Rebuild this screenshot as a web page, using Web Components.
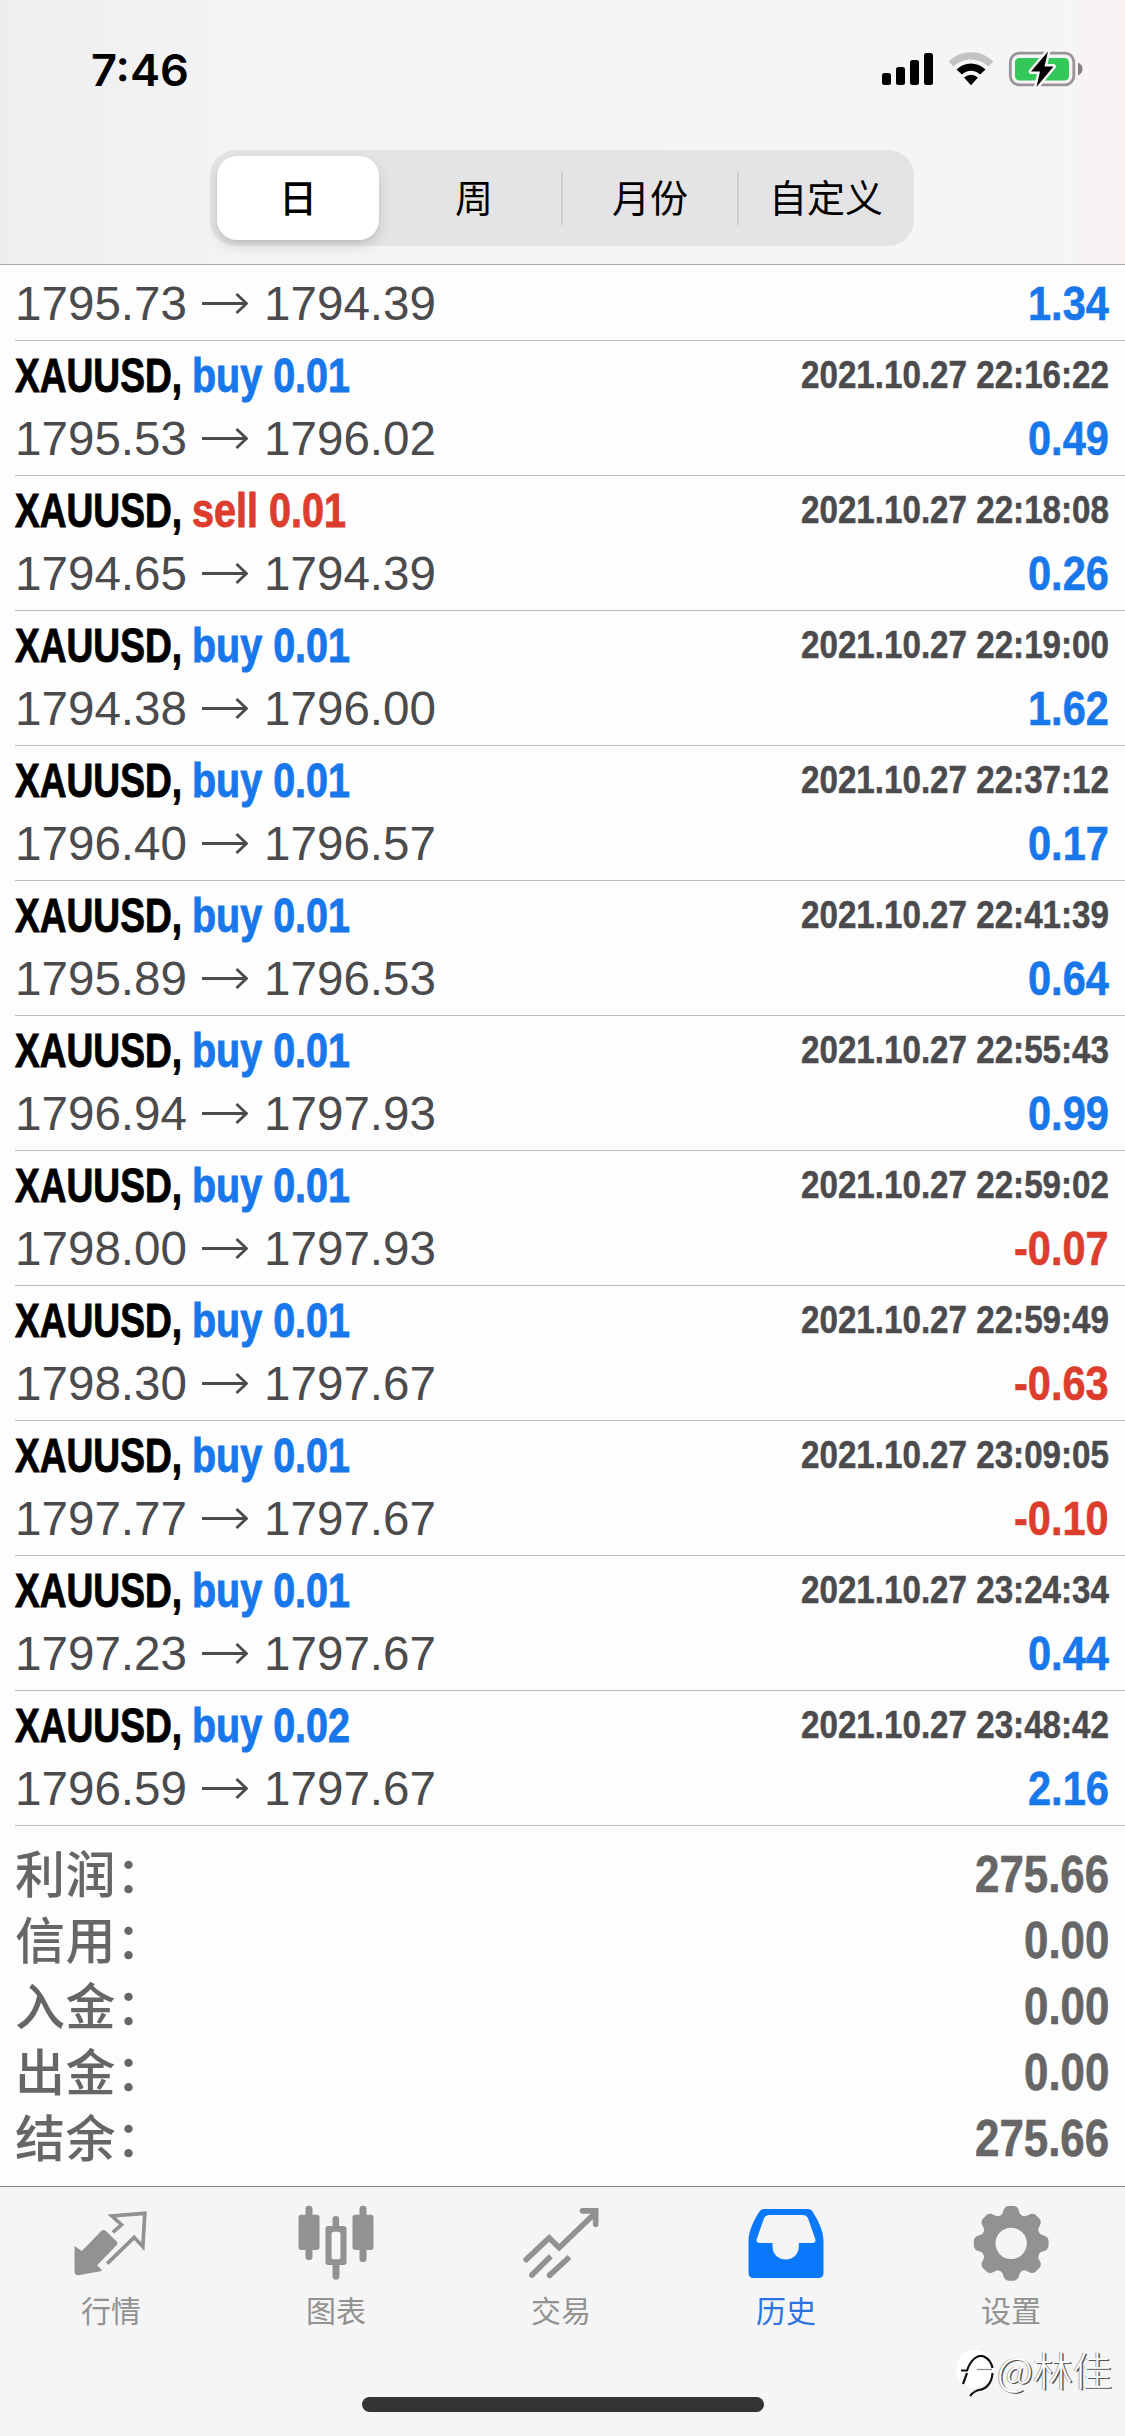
<!DOCTYPE html>
<html lang="zh-CN">
<head>
<meta charset="utf-8">
<title>历史</title>
<style>
html,body{margin:0;padding:0}
body{width:1125px;height:2436px;overflow:hidden;background:#fdfdfd;font-family:"Liberation Sans","Noto Sans CJK SC",sans-serif}
</style>
</head>
<body>
<history-screen></history-screen>
<script>
const define = (name, html, setup) => customElements.define(name, class extends HTMLElement {
  connectedCallback() {
    if (this.shadowRoot) return;
    const root = this.attachShadow({ mode: 'open' });
    const t = document.createElement('template');
    t.innerHTML = typeof html === 'function' ? html(this) : html;
    root.append(t.content.cloneNode(true));
    if (setup) setup(this, root);
  }
});

/* Condensed text: "w" is the finished width, "s" a horizontal scale. */
define('fit-text', `<style>
:host{display:block;white-space:pre;flex:none}
span{display:inline-block;transform-origin:0 0}
</style><span><slot></slot></span>`, (el, root) => {
  const span = root.querySelector('span');
  const natural = span.getBoundingClientRect().width;
  const s = el.hasAttribute('s') ? +el.getAttribute('s') : +el.getAttribute('w') / natural;
  el.style.width = natural * s + 'px';
  span.style.transform = `scaleX(${s})`;
});

define('status-bar', `<style>
:host{display:flex;justify-content:space-between;align-items:center;height:138px;box-sizing:border-box;padding:0 40px 0 91px}
.time{font:600 44px/138px Inter,"Liberation Sans",sans-serif;color:#000;padding-top:1px}
svg{display:block;width:212px;height:60px;margin-top:2px}
</style>
<fit-text class="time" w="98">7:46</fit-text>
<svg viewBox="873 40 212 60">
<g fill="#000"><rect x="882" y="73" width="9" height="12" rx="2.5"/><rect x="896" y="67" width="9" height="18" rx="2.5"/><rect x="910" y="60" width="9" height="25" rx="2.5"/><rect x="924" y="53" width="9" height="32" rx="2.5"/></g>
<path d="M948.5 61.5C961 49 981 49 993.500 61.500L988.500 66.500C978.500 57 963.500 57 953.500 66.500Z" fill="#c3c3c5"/>
<path d="M956.500 69.500C964.500 61.500 977.500 61.500 985.500 69.500L980 74.500C974.500 69.500 967.500 69.500 962 74.500Z" fill="#000"/>
<path d="M964 77.500Q971 72 978 77.500L971 85.300Z" fill="#000"/>
<rect x="1010.300" y="53.200" width="63.500" height="31.600" rx="9" fill="none" stroke="#99939a" stroke-width="2.800"/>
<rect x="1015" y="58" width="54" height="22.500" rx="4.500" fill="#34c759"/>
<path d="M1078 62.500Q1082.500 64.500 1082.500 69T1078 75.500Z" fill="#848086"/>
<path d="M1048 51.500L1031 71.500H1040L1036.500 87L1053.500 66.500H1044.500Z" fill="#000" stroke="#f8f6f7" stroke-width="5" stroke-linejoin="round" paint-order="stroke"/>
</svg>`);

define('segment-item', el => `<style>
:host{display:flex;flex:1;align-items:center;justify-content:center;position:relative}
div{display:flex;align-items:center;justify-content:center;width:162px;height:84px;border-radius:20px;font:400 38px/80px "Noto Sans CJK SC",sans-serif;color:#000;white-space:nowrap}
div slot{display:block;margin-top:-4px}
:host([selected]) div{background:#fff;font-weight:500;box-shadow:0 6px 14px rgba(0,0,0,.13),0 2px 3px rgba(0,0,0,.06)}
:host([divided])::before{content:"";position:absolute;left:-1px;top:21px;width:2px;height:54px;background:#cfcfd2}
</style><div><slot></slot></div>`);

define('period-picker', `<style>
:host{display:flex;width:704px;height:96px;margin:12px 0 0 210px;border-radius:26px;background:#e4e4e6}
</style>
<segment-item selected>日</segment-item><segment-item>周</segment-item><segment-item divided>月份</segment-item><segment-item divided>自定义</segment-item>`);

define('top-bar', `<style>
:host{display:block;height:265px;box-sizing:border-box;border-bottom:1px solid #acacae;background:linear-gradient(90deg,#eeeeef 0,#f4f4f6 22%,#f5f5f6 70%,#f6f5f5 94%,#f9f3f2 100%)}
</style><status-bar></status-bar><period-picker></period-picker>`);

define('deal-row', el => {
  const a = n => el.getAttribute(n);
  const kind = a('kind');
  const v = a('profit');
  return `<style>
:host{display:block;box-sizing:border-box;height:135px;padding:3px 16px 0 0;margin-left:15px;border-bottom:1px solid #bcbcc0}
:host([tail]){height:76px;padding-top:7px}
div{display:flex;justify-content:space-between}
.head{height:63px;font:bold 48px/63px "Liberation Sans",sans-serif}
.title{display:flex;gap:10px;color:#000;-webkit-text-stroke:.9px currentColor}
.buy{color:#1877ea}.sell{color:#dc3d2d}
.date{font-size:39px;line-height:61px;color:#4b4b4e;-webkit-text-stroke:.5px currentColor}
.body{height:62px;font:400 48px/64px "Liberation Sans",sans-serif;color:#4b4b4e}
.prices{justify-content:flex-start}
svg{width:46px;height:64px;margin:0 16px 0 15px;fill:none;stroke:#4b4b4e;stroke-width:2.800}
.value{font-weight:bold;-webkit-text-stroke:.6px currentColor}
</style>
${kind ? `<div class="head"><div class="title"><fit-text w="167">XAUUSD,</fit-text><fit-text class="${kind}" w="${kind === 'buy' ? 158 : 154}">${kind} ${a('lots')}</fit-text></div><fit-text class="date" w="308">2021.10.27 ${a('time')}</fit-text></div>` : ''}
<div class="body"><div class="prices"><fit-text w="172">${a('from')}</fit-text><svg viewBox="0 0 46 62"><path d="M0 30.500H44M34.500 21L44.500 30.500L34.500 40"/></svg><fit-text w="172">${a('to')}</fit-text></div><fit-text class="value ${v < 0 ? 'sell' : 'buy'}" s="0.865">${v}</fit-text></div>`;
});

define('summary-row', el => `<style>
:host{display:flex;justify-content:space-between;height:66px;padding:0 16px 0 15px;color:#666;line-height:66px}
.label{font:500 50px/66px "Noto Sans CJK SC",sans-serif;letter-spacing:.5px;margin-top:-3px}
.amount{font:bold 51px/68px "Liberation Sans",sans-serif;-webkit-text-stroke:.6px currentColor}
</style><span class="label"><slot></slot></span><fit-text class="amount" s="0.86">${el.getAttribute('amount')}</fit-text>`);

define('deal-list', `<style>
:host{display:flex;flex-direction:column;height:1921px;overflow:hidden}
.summary{padding-top:15px}
</style>
<deal-row tail from="1795.73" to="1794.39" profit="1.34"></deal-row>
<deal-row kind="buy" lots="0.01" time="22:16:22" from="1795.53" to="1796.02" profit="0.49"></deal-row>
<deal-row kind="sell" lots="0.01" time="22:18:08" from="1794.65" to="1794.39" profit="0.26"></deal-row>
<deal-row kind="buy" lots="0.01" time="22:19:00" from="1794.38" to="1796.00" profit="1.62"></deal-row>
<deal-row kind="buy" lots="0.01" time="22:37:12" from="1796.40" to="1796.57" profit="0.17"></deal-row>
<deal-row kind="buy" lots="0.01" time="22:41:39" from="1795.89" to="1796.53" profit="0.64"></deal-row>
<deal-row kind="buy" lots="0.01" time="22:55:43" from="1796.94" to="1797.93" profit="0.99"></deal-row>
<deal-row kind="buy" lots="0.01" time="22:59:02" from="1798.00" to="1797.93" profit="-0.07"></deal-row>
<deal-row kind="buy" lots="0.01" time="22:59:49" from="1798.30" to="1797.67" profit="-0.63"></deal-row>
<deal-row kind="buy" lots="0.01" time="23:09:05" from="1797.77" to="1797.67" profit="-0.10"></deal-row>
<deal-row kind="buy" lots="0.01" time="23:24:34" from="1797.23" to="1797.67" profit="0.44"></deal-row>
<deal-row kind="buy" lots="0.02" time="23:48:42" from="1796.59" to="1797.67" profit="2.16"></deal-row>
<div class="summary">
<summary-row amount="275.66">利润：</summary-row>
<summary-row amount="0.00">信用：</summary-row>
<summary-row amount="0.00">入金：</summary-row>
<summary-row amount="0.00">出金：</summary-row>
<summary-row amount="275.66">结余：</summary-row>
</div>`);

const teeth = (() => {
  let d = '';
  for (let i = 0; i < 8; i++) {
    const base = i * Math.PI / 4 - Math.PI / 2;
    const p = (r, deg) => {
      const t = base + deg * Math.PI / 180;
      return (875 + r * Math.cos(t)).toFixed(1) + ' ' + (220 + r * Math.sin(t)).toFixed(1);
    };
    d += (i ? 'L' : 'M') + p(92, -17) + 'L' + p(107, -11) + 'Q' + p(112, -8) + ' ' + p(112.5, -5) +
      'L' + p(112.5, 5) + 'Q' + p(112, 8) + ' ' + p(107, 11) + 'L' + p(92, 17) + 'Q' + p(87, 22.5) + ' ' + p(92, 28);
  }
  return d + 'Z';
})();

const icons = {
  quotes: ['202.5 90 270 255', `<path d="M225 228L247 243L306 182Q313 177 320 184L353 216Q356 221 351 226L293 286L307 300Q308 303 303 304L240 315Q225 318 225 304Z" fill="currentColor"/><path d="M340 187L366 164L337 138L436 130L430 230L404 202L323 281" fill="none" stroke="currentColor" stroke-width="11"/>`],
  chart: ['877.5 90 270 255', `<g fill="currentColor"><rect x="897" y="134" width="63" height="106" rx="8"/><rect x="918" y="107" width="21" height="163" rx="10"/><rect x="1059" y="134" width="63" height="106" rx="8"/><rect x="1080" y="107" width="21" height="169" rx="10"/><path fill-rule="evenodd" d="M999 168V148a10 10 0 0 1 20 0V168H1033q8 0 8 8V277q0 8-8 8H1020V319a10 10 0 0 1-21 0V285H986q-8 0-8-8V176q0-8 8-8ZM1003 185q-7 0-7 7V260q0 8 7 8h13q7 0 7-8V192q0-7-7-7Z"/></g>`],
  trade: ['352.5 90 270 255', `<g fill="none" stroke="currentColor" stroke-width="17"><path d="M380 269L449 204L479 233L588 128" stroke-linecap="round"/><path d="M549 122.500H588.500V163" stroke-linecap="round"/><path d="M454 259L397 315M510 261L450 316"/><path d="M397 315h.1M450 316h.1" stroke-linecap="round"/></g>`],
  history: ['67.5 90 270 255', `<path fill="currentColor" fill-rule="evenodd" d="M133 117H265Q275 117 280 126C294 150 312 180 312 214V308Q312 324 297 324H102Q87 324 87 308V214C87 180 106 146 119 126Q124 117 133 117ZM151 135Q138 135 133 146L112 206Q108 219 120 219H159V228C159 282 238 282 238 228V219H279Q291 219 287 206L266 146Q261 135 250 135Z"/>`],
  settings: ['742.5 90 270 255', `<path fill="currentColor" fill-rule="evenodd" d="${teeth}M922 220a47 47 0 1 0-94 0a47 47 0 1 0 94 0Z"/>`]
};

define('tab-item', el => {
  const [box, art] = icons[el.getAttribute('icon')];
  return `<style>
:host{display:flex;flex:1;flex-direction:column;align-items:center;box-sizing:border-box;padding-right:3px;color:#929292}
:host([active]){color:#0a78fb}
svg{display:block;width:90px;height:85px;margin:13px 0 0 1px}
span{font:400 30px/44px "Noto Sans CJK SC",sans-serif;margin-top:2px}
:host([active]) span{color:#2b73e0}
</style><svg viewBox="${box}">${art}</svg><span><slot></slot></span>`;
});

define('tab-bar', `<style>
:host{display:flex;flex-direction:column;align-items:center;height:250px;box-sizing:border-box;border-top:1px solid #88888a;background:#f5f5f5}
nav{display:flex;width:100%;height:210px}
.home{width:402px;height:15px;border-radius:8px;background:#333}
</style>
<nav><tab-item icon="quotes">行情</tab-item><tab-item icon="chart">图表</tab-item><tab-item icon="trade">交易</tab-item><tab-item icon="history" active>历史</tab-item><tab-item icon="settings">设置</tab-item></nav>
<div class="home"></div>`);

define('author-mark', `<style>
:host{position:absolute;left:954px;top:2345px;display:flex;align-items:center;height:54px}
svg{width:43px;height:54px;flex:none}
span{font:300 39.500px/54px "Noto Sans CJK SC",sans-serif;color:#fff;text-shadow:1.500px 1px 0 #555,-1px 0 0 #aaa;white-space:nowrap;margin-top:-6px}
</style>
<svg viewBox="0 0 43 54"><circle cx="21" cy="24" r="19" fill="#fff"/><path d="M7 25.500H13C17 14 24 9 30 11.500Q37 15 38.500 23M13 28L9 39M38.500 28C38 37 33 44 25 45Q20 46 16 51" fill="none" stroke="#111" stroke-width="2.200"/><path d="M23 24.500H38" stroke="#888" stroke-width="1.200"/></svg>
<span>@林佳</span>`);

define('history-screen', `<style>
:host{display:flex;flex-direction:column;width:1125px;height:2436px;position:relative}
</style><top-bar></top-bar><deal-list></deal-list><tab-bar></tab-bar><author-mark></author-mark>`);
</script>
</body>
</html>
